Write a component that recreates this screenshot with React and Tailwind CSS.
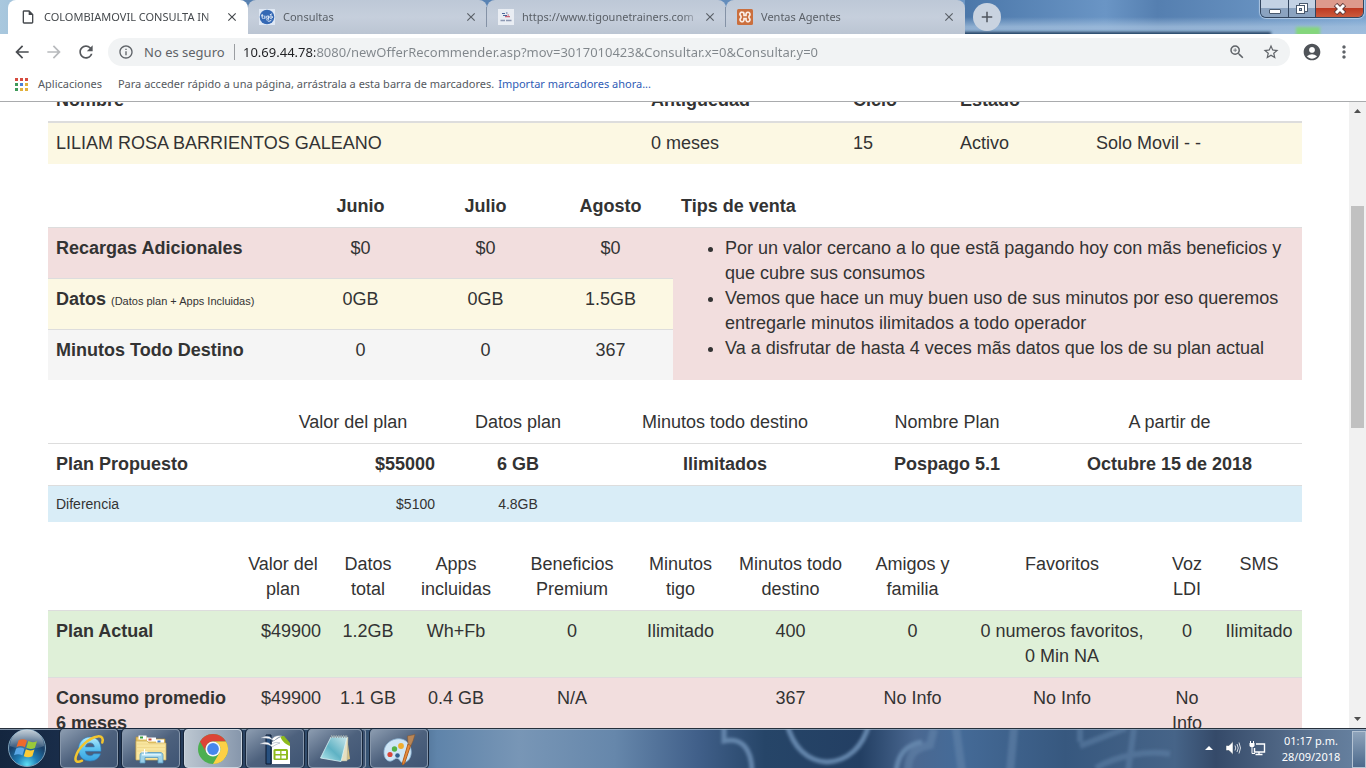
import {
  MdAccountCircle,
  MdAdd,
  MdArrowBack,
  MdArrowForward,
  MdClose,
  MdInfoOutline,
  MdMoreVert,
  MdOutlineInsertDriveFile,
  MdRefresh,
  MdStarBorder,
  MdZoomIn,
} from "react-icons/md";

const URL_TEXT =
  "10.69.44.78:8080/newOfferRecommender.asp?mov=3017010423&Consultar.x=0&Consultar.y=0";

/* ---------- Browser window ---------- */

function TigoIcon() {
  return (
    <svg viewBox="0 0 16 16" className="size-4 shrink-0" aria-hidden="true">
      <rect width="16" height="16" fill="#dfe8f4" />
      <circle cx="8" cy="8" r="7.3" fill="#3468b4" />
      <g fill="none" stroke="#dfe9f7" strokeWidth="1" strokeLinecap="round">
        <path d="M3.2 5.4v3.4c0 .6.4.8 1 .7M2.4 6.8h1.7M5.8 7v2.6" />
        <circle cx="8.3" cy="8.2" r="1.2" />
        <path d="M9.6 7v3.2c0 1-1.8 1.2-2.3.5" />
        <circle cx="12" cy="8.1" r="1.3" />
        <path d="M11.2 5.6l1.5-.6M9.2 12.2c1.3.2 2.6-.2 3.3-1.2" />
      </g>
    </svg>
  );
}

function TrainersIcon() {
  return (
    <svg viewBox="0 0 16 16" className="size-4 shrink-0" aria-hidden="true">
      <rect width="16" height="16" fill="#e9edf3" />
      <path d="M4 4.500h3M8 4h1.500M5 6.500h4" stroke="#4d6799" strokeWidth="1.100" />
      <path d="M7 7.600h5M9.500 6h1.500" stroke="#cd6478" strokeWidth="1.100" />
      <path d="M2.500 11.500h4.500M8 11.500h5.500" stroke="#8c98b2" strokeWidth="1.300" />
    </svg>
  );
}

function XamppIcon() {
  return (
    <svg viewBox="0 0 16 16" className="size-4 shrink-0" aria-hidden="true">
      <rect width="16" height="16" rx="1.500" fill="#cb6f3d" />
      <path
        d="M5 3.200a2 2 0 0 1 2 2v1.300h2V5.200a2 2 0 1 1 3.300 1.600c-.5.5-.5 1.900 0 2.400A2 2 0 1 1 9 10.800V9.500H7v1.300a2 2 0 1 1-3.300-1.600c.5-.5.5-1.900 0-2.400A2 2 0 0 1 5 3.200z"
        fill="none"
        stroke="#fbeee6"
        strokeWidth="1.700"
      />
    </svg>
  );
}

function Tab({ icon, title, active, divider }) {
  return (
    <div
      className={
        active
          ? "flex h-full w-60 items-center rounded-t-lg bg-white pl-3 text-[#45494d]"
          : "flex h-full w-[239px] items-center rounded-t-lg bg-linear-to-b from-[#bdc8d7] via-[#c6cfdc] to-[#bbc5d3] pl-[11px] text-[#5a6067]"
      }
    >
      {icon}
      <span className="ml-2 w-[178px] overflow-hidden whitespace-nowrap text-[11px] leading-5 mask-r-from-90%">
        {title}
      </span>
      <button type="button" aria-label={"Cerrar " + title} className="ml-0.5 grid size-4 place-items-center">
        <MdClose className="size-3.5" />
      </button>
      {divider && <span className="ml-auto h-5 w-px bg-[#8492a6]" />}
    </div>
  );
}

function WindowControls() {
  return (
    <div className="ml-auto mr-0.5 flex h-[18px] overflow-hidden rounded-b-md border border-t-0 border-[#33465f] shadow-[0_0_1px_1px_rgba(220,235,250,0.6)]">
      <button
        type="button"
        aria-label="Minimizar"
        className="grid w-7 place-items-center border-r border-[#33465f] bg-linear-to-b from-[#c3d2e4] from-50% to-[#8ba3c0] to-50%"
      >
        <svg viewBox="0 0 14 12" className="h-3 w-3.5">
          <rect x="1.500" y="6.500" width="11" height="4" rx=".5" fill="#fff" stroke="#4a5a6e" />
        </svg>
      </button>
      <button
        type="button"
        aria-label="Restaurar"
        className="grid w-[27px] place-items-center border-r border-[#33465f] bg-linear-to-b from-[#c3d2e4] from-50% to-[#8ba3c0] to-50%"
      >
        <svg viewBox="0 0 14 14" className="size-3.5">
          <rect x="4.500" y="1.500" width="8" height="8" fill="#fff" stroke="#4a5a6e" />
          <rect x="1.500" y="3.500" width="8" height="8" fill="#fff" stroke="#4a5a6e" />
          <rect x="4.500" y="6.500" width="2" height="2" fill="#b5c4d6" stroke="#4a5a6e" />
        </svg>
      </button>
      <button
        type="button"
        aria-label="Cerrar ventana"
        className="grid w-[47px] place-items-center bg-linear-to-b from-[#dd9a8c] from-45% via-[#bd3a22] via-50% to-[#cc5a3c]"
      >
        <svg viewBox="0 0 14 12" className="h-3 w-3.5">
          <path d="M2.500 1.500l9 9M11.500 1.500l-9 9" stroke="#5e3a3a" strokeWidth="4.800" />
          <path d="M3 2l8 8M11 2l-8 8" stroke="#fff" strokeWidth="2.900" />
        </svg>
      </button>
    </div>
  );
}

function TabStrip() {
  return (
    <div className="relative h-[34px] shrink-0 overflow-hidden bg-linear-to-r from-[#a9c8de] from-0% via-[#4f79ab] via-20% to-[#7fa8d3]">
      <svg
        className="absolute inset-y-0 right-0 h-full w-[401px]"
        viewBox="0 0 401 34"
        preserveAspectRatio="none"
        aria-hidden="true"
      >
        <defs>
          <linearGradient id="sky" x1="0" x2="1" y1="0" y2="0">
            <stop offset="0" stopColor="#4b77a9" />
            <stop offset=".35" stopColor="#6a95c5" />
            <stop offset=".48" stopColor="#557fb0" />
            <stop offset="1" stopColor="#78a3d0" />
          </linearGradient>
          <linearGradient id="haze" x1="0" x2="0" y1="0" y2="1">
            <stop offset=".5" stopColor="#a9c4e0" stopOpacity="0" />
            <stop offset=".78" stopColor="#a9c4e0" stopOpacity=".7" />
            <stop offset="1" stopColor="#a9c4e0" stopOpacity=".8" />
          </linearGradient>
          <filter id="soft" x="-20%" y="-100%" width="140%" height="300%">
            <feGaussianBlur stdDeviation="1.500" />
          </filter>
        </defs>
        <rect width="401" height="34" fill="url(#sky)" />
        <rect width="401" height="34" fill="url(#haze)" />
        <rect x="-6" y="32" width="312" height="4" fill="#1f3a5c" filter="url(#soft)" />
        <rect x="331" y="27" width="24" height="9" fill="#84d67c" filter="url(#soft)" />
      </svg>
      <div className="relative flex h-full pl-2">
        <Tab active icon={<MdOutlineInsertDriveFile className="size-4 shrink-0" />} title="COLOMBIAMOVIL CONSULTA IN" />
        <Tab divider icon={<TigoIcon />} title="Consultas" />
        <Tab divider icon={<TrainersIcon />} title="https://www.tigounetrainers.com" />
        <Tab icon={<XamppIcon />} title="Ventas Agentes" />
        <button
          type="button"
          aria-label="Nueva pestaña"
          className="ml-2 mt-[3px] grid size-7 place-items-center rounded-full bg-[#c9d3e0] text-[#4f565e]"
        >
          <MdAdd className="size-[18px]" />
        </button>
        <WindowControls />
      </div>
    </div>
  );
}

function Toolbar() {
  return (
    <div className="flex h-9 shrink-0 items-center bg-white pl-3.5 pr-3 text-[#5f6368]">
      <button type="button" aria-label="Atrás" className="mr-4 text-[#4a4d51]">
        <MdArrowBack className="size-4 scale-125" />
      </button>
      <button type="button" aria-label="Adelante" className="mr-4 text-[#b8babd]">
        <MdArrowForward className="size-4 scale-125" />
      </button>
      <button type="button" aria-label="Recargar" className="mr-3.5 text-[#55585c]">
        <MdRefresh className="size-4 scale-125" />
      </button>
      <div className="flex h-7 flex-1 items-center rounded-full bg-[#f1f3f4] pl-2.5 pr-2.5">
        <MdInfoOutline className="size-4 shrink-0" />
        <label htmlFor="url" className="ml-2.5 w-[91px] whitespace-nowrap border-r border-[#9a9da1] text-[13px] leading-4">
          No es seguro
        </label>
        <input
          id="url"
          type="text"
          defaultValue={URL_TEXT}
          className="ml-2 min-w-0 flex-1 bg-[linear-gradient(90deg,#202124_72px,#80868b_72px)] bg-clip-text text-[13px] leading-5 text-transparent outline-none"
        />
        <button type="button" aria-label="Zoom" className="mr-4">
          <MdZoomIn className="size-[18px]" />
        </button>
        <button type="button" aria-label="Añadir a marcadores">
          <MdStarBorder className="size-[18px]" />
        </button>
      </div>
      <button type="button" aria-label="Perfil" className="ml-3 text-[#505459]">
        <MdAccountCircle className="size-5" />
      </button>
      <button type="button" aria-label="Menú" className="ml-3">
        <MdMoreVert className="size-5" />
      </button>
    </div>
  );
}

const APP_DOTS = [
  "#d64b3f", "#d64b3f", "#d64b3f",
  "#3f9a5a", "#4a7fd6", "#e2b13c",
  "#3f9a5a", "#e2b13c", "#e2b13c",
];

function BookmarksBar() {
  return (
    <div className="flex h-8 shrink-0 items-center border-b border-[#a9abad] bg-white pb-0.5 pl-[15px] text-[11px] text-[#55595e]">
      <button type="button" className="flex items-center gap-2.5">
        <svg viewBox="0 0 13 13" className="size-[13px]" aria-hidden="true">
          {APP_DOTS.map((c, i) => (
            <rect key={i} x={(i % 3) * 5} y={Math.floor(i / 3) * 5} width="3" height="3" fill={c} />
          ))}
        </svg>
        Aplicaciones
      </button>
      <span className="ml-4">
        Para acceder rápido a una página, arrástrala a esta barra de marcadores.
      </span>
      <a href="#importar" className="ml-1 text-[#2f5cb5]">
        Importar marcadores ahora...
      </a>
    </div>
  );
}

/* ---------- Page tables ---------- */

function Cols({ widths }) {
  return (
    <colgroup>
      {widths.map((w, i) => (
        <col key={i} style={{ width: w }} />
      ))}
    </colgroup>
  );
}

const TABLE = "w-full table-fixed border-separate border-spacing-0 [&_td]:p-2 [&_th]:p-2 [&_td]:align-top [&_th]:align-top";
const LINED = " [&_tbody_td]:border-t [&_tbody_th]:border-t [&_tbody_td]:border-[#dddddd] [&_tbody_th]:border-[#dddddd]";

function CustomerTable() {
  return (
    <table className={TABLE + " text-left"}>
      <Cols widths={[595, 202, 107, 136, 214]} />
      <thead>
        <tr className="[&>th]:border-b-2 [&>th]:border-[#dddddd]">
          <th>Nombre</th>
          <th>Antiguedad</th>
          <th>Ciclo</th>
          <th>Estado</th>
          <th></th>
        </tr>
      </thead>
      <tbody>
        <tr className="bg-[#fcf8e3]">
          <td>LILIAM ROSA BARRIENTOS GALEANO</td>
          <td>0 meses</td>
          <td>15</td>
          <td>Activo</td>
          <td>Solo Movil - -</td>
        </tr>
      </tbody>
    </table>
  );
}

function UsageTable() {
  return (
    <table className={TABLE + LINED + " text-center"}>
      <Cols widths={[250, 125, 125, 125, 629]} />
      <thead>
        <tr>
          <th></th>
          <th>Junio</th>
          <th>Julio</th>
          <th>Agosto</th>
          <th className="text-left">Tips de venta</th>
        </tr>
      </thead>
      <tbody>
        <tr className="h-[51px] bg-[#f2dede]">
          <th className="text-left">Recargas Adicionales</th>
          <td>$0</td>
          <td>$0</td>
          <td>$0</td>
          <td rowSpan={3} className="text-left">
            <ul className="list-disc pl-11">
              <li>Por un valor cercano a lo que estã pagando hoy con mãs beneficios y que cubre sus consumos</li>
              <li>Vemos que hace un muy buen uso de sus minutos por eso queremos entregarle minutos ilimitados a todo operador</li>
              <li>Va a disfrutar de hasta 4 veces mãs datos que los de su plan actual</li>
            </ul>
          </td>
        </tr>
        <tr className="h-[51px] bg-[#fcf8e3]">
          <th className="whitespace-nowrap text-left">
            Datos <small className="text-[11px] font-normal">(Datos plan + Apps Incluidas)</small>
          </th>
          <td>0GB</td>
          <td>0GB</td>
          <td>1.5GB</td>
        </tr>
        <tr className="h-[51px] bg-[#f5f5f5]">
          <th className="text-left">Minutos Todo Destino</th>
          <td>0</td>
          <td>0</td>
          <td>367</td>
        </tr>
      </tbody>
    </table>
  );
}

function ProposalTable() {
  return (
    <table className={TABLE + LINED + " text-center"}>
      <Cols widths={[215, 180, 150, 264, 180, 265]} />
      <thead>
        <tr className="[&>th]:font-normal">
          <th></th>
          <th>Valor del plan</th>
          <th>Datos plan</th>
          <th>Minutos todo destino</th>
          <th>Nombre Plan</th>
          <th>A partir de</th>
        </tr>
      </thead>
      <tbody>
        <tr className="font-bold">
          <th className="text-left">Plan Propuesto</th>
          <td className="text-right">$55000</td>
          <td>6 GB</td>
          <td>Ilimitados</td>
          <td>Pospago 5.1</td>
          <td>Octubre 15 de 2018</td>
        </tr>
        <tr className="bg-[#d9edf7] text-sm leading-5">
          <th className="text-left font-normal">Diferencia</th>
          <td className="text-right">$5100</td>
          <td>4.8GB</td>
          <td></td>
          <td></td>
          <td></td>
        </tr>
      </tbody>
    </table>
  );
}

function PlanTable() {
  return (
    <table className={TABLE + LINED + " text-center"}>
      <Cols widths={[189, 92, 78, 98, 134, 83, 137, 107, 192, 58, 86]} />
      <thead>
        <tr className="[&>th]:font-normal">
          <th></th>
          <th>Valor del plan</th>
          <th>Datos total</th>
          <th>Apps incluidas</th>
          <th>Beneficios Premium</th>
          <th>Minutos tigo</th>
          <th>Minutos todo destino</th>
          <th>Amigos y familia</th>
          <th>Favoritos</th>
          <th>Voz LDI</th>
          <th>SMS</th>
        </tr>
      </thead>
      <tbody>
        <tr className="bg-[#dff0d8]">
          <th className="text-left">Plan Actual</th>
          <td className="text-right">$49900</td>
          <td>1.2GB</td>
          <td>Wh+Fb</td>
          <td>0</td>
          <td>Ilimitado</td>
          <td>400</td>
          <td>0</td>
          <td>
            0 numeros favoritos,
            <br />0 Min NA
          </td>
          <td>0</td>
          <td>Ilimitado</td>
        </tr>
        <tr className="bg-[#f2dede]">
          <th className="text-left">Consumo promedio 6 meses</th>
          <td className="text-right">$49900</td>
          <td>1.1 GB</td>
          <td>0.4 GB</td>
          <td>N/A</td>
          <td></td>
          <td>367</td>
          <td>No Info</td>
          <td>No Info</td>
          <td>No Info</td>
          <td></td>
        </tr>
      </tbody>
    </table>
  );
}

function ScrollBar() {
  return (
    <div className="flex w-[17px] shrink-0 flex-col items-center bg-[#f1f1f1]" aria-hidden="true">
      <svg viewBox="0 0 7 4" className="mb-[93px] mt-[7px] h-1 w-[7px] shrink-0">
        <path d="M0 4L3.500 0L7 4z" fill="#505050" />
      </svg>
      <div className="h-[222px] w-[13px] shrink-0 bg-[#c1c1c1]" />
      <svg viewBox="0 0 7 4" className="mb-[7px] mt-auto h-1 w-[7px] shrink-0">
        <path d="M0 0L3.500 4L7 0z" fill="#505050" />
      </svg>
    </div>
  );
}

/* ---------- Taskbar ---------- */

function StartOrb() {
  return (
    <svg viewBox="0 0 40 40" className="size-10" aria-hidden="true">
      <defs>
        <radialGradient id="orb" cx=".5" cy=".95" r=".95">
          <stop offset="0" stopColor="#5fe0f5" />
          <stop offset=".3" stopColor="#1f7db5" />
          <stop offset=".65" stopColor="#1a4069" />
          <stop offset="1" stopColor="#54748f" />
        </radialGradient>
        <linearGradient id="orbShine" x1="0" x2="0" y1="0" y2="1">
          <stop offset="0" stopColor="#fff" stopOpacity=".65" />
          <stop offset="1" stopColor="#fff" stopOpacity=".1" />
        </linearGradient>
      </defs>
      <circle cx="20" cy="20" r="18.500" fill="url(#orb)" stroke="#7fa3bc" strokeWidth="1" />
      <path d="M3 18a17 16.500 0 0 1 34 0c-8 4-26 4-34 0z" fill="url(#orbShine)" />
      <g transform="translate(-1 1) scale(1.050 .97)">
        <path d="M12 11.500c3-1.500 5.500-1.300 8 .3l-2 7c-2.500-1.500-5-1.700-8-.3z" fill="#ee6a2c" />
        <path d="M21.300 12.400c2.600 1.500 5.200 1.600 8.200.2l-2 7c-3 1.400-5.600 1.200-8.200-.2z" fill="#9ac93a" />
        <path d="M9.600 20c3-1.500 5.500-1.200 8 .3l-2 7c-2.500-1.500-5-1.700-8-.3z" fill="#5aa7e6" />
        <path d="M18.900 21c2.600 1.500 5.200 1.600 8.200.2l-2 7c-3 1.400-5.600 1.200-8.200-.2z" fill="#fccb35" />
      </g>
    </svg>
  );
}

function ExplorerE() {
  return (
    <svg viewBox="0 0 32 32" className="size-8" aria-hidden="true">
      <defs>
        <linearGradient id="ie" x1="0" x2="0" y1="0" y2="1">
          <stop offset="0" stopColor="#b5ebfc" />
          <stop offset=".5" stopColor="#5cc3f0" />
          <stop offset="1" stopColor="#37a2e0" />
        </linearGradient>
      </defs>
      <path
        d="M17 4C10.500 4 5.500 9.200 5.500 16.200 5.500 23.300 10.300 28 17 28c5.200 0 9-2.600 10.500-7.200h-6.800c-.7 1.200-1.900 1.900-3.600 1.900-2.700 0-4.500-1.500-4.700-4.400H28C28.600 9.500 24.200 4 17 4zm-4.500 9.900c.4-2.500 2-4 4.500-4s4.100 1.500 4.300 4z"
        fill="url(#ie)"
        stroke="#2a80c2"
        strokeWidth=".6"
      />
      <path
        d="M29.300 9.500C30.500 5.500 29 3 24.800 3.400 16 4.600 5.200 14.500 2.700 24c-1 4.200 1.300 6.200 6.300 3.700"
        fill="none"
        stroke="#f2c52f"
        strokeWidth="2.500"
        strokeLinecap="round"
      />
    </svg>
  );
}

function FolderIcon() {
  return (
    <svg viewBox="0 0 34 32" className="h-8 w-[34px]" aria-hidden="true">
      <path d="M2 4h11l2 2h16v20H2z" fill="#e8c765" stroke="#b4913e" strokeWidth=".7" />
      <path d="M4.500 2.500h8v4h-8z" fill="#fff" />
      <path d="M6 3.500h3v2H6z" fill="#3ba040" />
      <path d="M13 4.500h9v4h-9z" fill="#fff" />
      <path d="M14.500 5.500h3v2h-3z" fill="#c84637" />
      <path d="M22 6.500h8v4h-8z" fill="#fff" />
      <path d="M23.500 7.500h3v2h-3z" fill="#3f7fcc" />
      <path d="M2 8h11l2 2h17v17H2z" fill="#f8e6a0" stroke="#c9a956" strokeWidth=".7" />
      <path d="M3 11h28M3 14.500h28M3 18h28" stroke="#efd688" strokeWidth=".8" />
      <path
        d="M6 30v-7.500c0-2 1-3 3-3h17c2 0 3 1 3 3V30h-5v-5.500H11V30z"
        fill="#9ad3ee"
        fillOpacity=".95"
        stroke="#5697bd"
        strokeWidth=".8"
      />
      <path d="M8 21.800h19" stroke="#dff4fd" strokeWidth="1.500" />
      <path d="M10.500 16v6M7.500 19h6" stroke="#fff" strokeWidth="1" />
    </svg>
  );
}

function ChromeIcon() {
  return (
    <svg viewBox="0 0 32 32" className="size-8" aria-hidden="true">
      <circle cx="16" cy="16" r="15" fill="#4caf50" />
      <path d="M3 8.500A15 15 0 0 1 29 8.500H16a7.500 7.500 0 0 0-6.500 11.200z" fill="#dc4437" />
      <path d="M29 8.500A15 15 0 0 1 16 31l6.500-11.300A7.500 7.500 0 0 0 16 8.500z" fill="#fdd045" />
      <circle cx="16" cy="16" r="7.500" fill="#f6f8fa" />
      <circle cx="16" cy="16" r="5.900" fill="#4787ed" />
    </svg>
  );
}

function CalcIcon() {
  return (
    <svg viewBox="0 0 34 32" className="h-8 w-[34px]" aria-hidden="true">
      <path d="M8 2h5v29H8z" fill="#27507f" stroke="#0a1830" />
      <path d="M14 9l10-6 8 8v20H14z" fill="#fff" />
      <path d="M22 3h4l6 7v3c-3-1-8-4-10-10z" fill="#8fbb1c" />
      <path
        d="M3 5c5-3 9-2 11 1 2-3 6-4 10-3-4 1-6 3-8 5-4-3-8-3-13-3zM2 11c5-3 9-2 11 1 3-3 6-3 9-2-3 1-5 2-8 4-3-3-7-3-12-3z"
        fill="#fff"
        stroke="#8a99ad"
        strokeWidth=".5"
      />
      <rect x="15.500" y="16" width="14.500" height="11" rx="1.500" fill="#8fbb1c" />
      <path d="M17.500 18h4.700v3h-4.700zM23.500 18H28v3h-4.500zM17.500 22.500h4.700v3h-4.700zM23.500 22.500H28v3h-4.500z" fill="#fff" />
    </svg>
  );
}

function NotepadIcon() {
  return (
    <svg viewBox="0 0 32 32" className="size-8" aria-hidden="true">
      <defs>
        <linearGradient id="pad" x1="0" x2="1" y1="1" y2="0">
          <stop offset="0" stopColor="#b9e9ee" />
          <stop offset=".45" stopColor="#5fb2c4" />
          <stop offset="1" stopColor="#c9e6ea" />
        </linearGradient>
      </defs>
      <path d="M28 4l3 22-3 1z" fill="#d8c283" />
      <path d="M12 4h17l-1 24H22z" fill="#e6dfc0" stroke="#a7ae9c" strokeWidth=".5" />
      <path d="M12 4h16l-6 24.500L1.500 25z" fill="url(#pad)" stroke="#d9f1f5" strokeWidth=".8" />
      <path d="M12 3.500h17" stroke="#93a0a6" strokeWidth="3" strokeDasharray="1.200 1.200" />
    </svg>
  );
}

function PaintIcon() {
  return (
    <svg viewBox="0 0 34 32" className="h-8 w-[34px]" aria-hidden="true">
      <path
        d="M14 6C6 7.500 1.500 13.500 2 20.500 2.500 27 7 29.500 10.500 27.500c2.500-1.500 3.500-3 6-1.500 2 1.300 2 4.500 6 3.500 5-1.200 7.500-7 6.500-13C27.800 9 21.500 4.600 14 6z"
        fill="#cfe6f6"
        stroke="#8bb3d3"
        strokeWidth=".8"
      />
      <circle cx="8" cy="21.500" r="2.600" fill="#d9473a" />
      <circle cx="12.500" cy="16" r="2.700" fill="#53b348" />
      <circle cx="19" cy="13" r="2.900" fill="#f0ad2e" />
      <circle cx="15.500" cy="22.500" r="2.300" fill="#33608f" />
      <path d="M26 11l2.800.8L22.500 30.500l-2 1.500.2-3z" fill="#e98d3b" stroke="#b05f22" strokeWidth="1" />
      <path d="M25.500 3l7.500-1.500-2 6.500-2 4.500-3-1z" fill="#b98657" stroke="#80552f" strokeWidth=".5" />
    </svg>
  );
}

function TaskButton({ label, active, stacked, children }) {
  return (
    <div className="flex">
      <button
        type="button"
        aria-label={label}
        className={
          "grid h-[39px] place-items-center rounded-sm border shadow-[0_0_0_1px_#17263b] " +
          (stacked ? "w-[54px] " : "w-[58px] ") +
          (active
            ? "border-[#cbd5df] bg-linear-to-r from-[#bcc7d1] to-[#8797ac]"
            : "border-[#8797ab] bg-linear-to-br from-[#8c9cb0] via-[#4d617d] to-[#3f5574]")
        }
      >
        {children}
      </button>
      {stacked && <span className="ml-px h-[39px] w-[3px] rounded-r-sm border border-l-0 border-[#8797ab] bg-[#3c5271]" />}
    </div>
  );
}

function TaskbarBackdrop() {
  return (
    <svg
      className="absolute inset-0 h-full w-full"
      viewBox="0 0 1366 40"
      preserveAspectRatio="none"
      aria-hidden="true"
    >
      <defs>
        <linearGradient id="bar" x1="0" x2="1" y1="0" y2="0">
          <stop offset="0" stopColor="#14263f" />
          <stop offset=".06" stopColor="#1b2f4d" />
          <stop offset=".29" stopColor="#3b5878" />
          <stop offset=".32" stopColor="#5f84aa" />
          <stop offset=".38" stopColor="#7896b6" />
          <stop offset=".45" stopColor="#6687ab" />
          <stop offset=".51" stopColor="#41608a" />
          <stop offset=".56" stopColor="#264568" />
          <stop offset=".63" stopColor="#233f63" />
          <stop offset=".67" stopColor="#4a6891" />
          <stop offset=".7" stopColor="#456b98" />
          <stop offset=".78" stopColor="#37587f" />
          <stop offset=".86" stopColor="#466488" />
          <stop offset=".89" stopColor="#354a69" />
          <stop offset=".96" stopColor="#5b7391" />
          <stop offset="1" stopColor="#6883a2" />
        </linearGradient>
        <filter id="glow" x="-10%" y="-30%" width="120%" height="160%">
          <feGaussianBlur stdDeviation="1.500" />
        </filter>
      </defs>
      <rect width="1366" height="40" fill="url(#bar)" />
      <g fill="none" stroke="#6485ab" strokeWidth="5" filter="url(#glow)">
        <path d="M724 -4v17c18-4 28 8 28 32" />
        <path d="M787 -4c6 23 20 37 40 38 21-1 36-15 42-38" />
        <path d="M922 14c-16 3-24 12-26 30" />
        <path d="M908 44c0-20 8-24 22-27l4-16M956 0l6 44M1014 0l-4 44" strokeWidth="8" opacity=".55" />
        <path d="M1080 18l46-18M1134 0l-6 44M1096 40c20-12 50-18 74-14M1080 0v14" strokeWidth="6" opacity=".5" />
      </g>
      <path d="M0 .5h1366" stroke="#26303c" />
      <path d="M0 1.500h1366" stroke="#a9bccf" strokeOpacity=".7" />
    </svg>
  );
}

function Taskbar() {
  return (
    <footer className="relative h-10 shrink-0 overflow-hidden">
      <TaskbarBackdrop />
      <div className="relative flex h-full items-end">
        <button type="button" aria-label="Inicio" className="ml-[7px] mr-[13px]">
          <StartOrb />
        </button>
        <div className="flex gap-1">
          <TaskButton label="Internet Explorer"><ExplorerE /></TaskButton>
          <TaskButton label="Explorador de Windows"><FolderIcon /></TaskButton>
          <TaskButton label="Google Chrome" active><ChromeIcon /></TaskButton>
          <TaskButton label="OpenOffice Calc"><CalcIcon /></TaskButton>
          <TaskButton label="Bloc de notas" stacked><NotepadIcon /></TaskButton>
          <TaskButton label="Paint"><PaintIcon /></TaskButton>
        </div>
        <div className="ml-auto flex h-full items-center text-white">
          <button type="button" aria-label="Mostrar iconos ocultos">
            <svg viewBox="0 0 8 4" className="h-1 w-2">
              <path d="M0 4l4-4 4 4z" fill="#fff" />
            </svg>
          </button>
          <button type="button" aria-label="Volumen" className="ml-3">
            <svg viewBox="0 0 16 16" className="size-4">
              <path d="M1 5.500h3L8 1.500v13l-4-4H1z" fill="#fff" stroke="#33445b" strokeWidth=".5" />
              <path d="M10 5.500q1.500 2.500 0 5M12 4q2.500 4 0 8M14 2.500q3 5.500 0 11" fill="none" stroke="#fff" strokeWidth=".8" />
            </svg>
          </button>
          <button type="button" aria-label="Red" className="ml-2">
            <svg viewBox="0 0 17 16" className="h-4 w-[17px]">
              <path d="M7 4h8.500v8H5.500V8M6.500 14.500h7M10 12v2" fill="none" stroke="#fff" strokeWidth="1.400" />
              <path d="M1.500 1v3M4.500 1v3M3 7v6.500h3" fill="none" stroke="#fff" strokeWidth="1" />
              <path d="M.5 3h5v3L4.500 7h-3L.5 6z" fill="#fff" />
            </svg>
          </button>
          <time dateTime="2018-09-28T13:17" className="ml-3 mr-2 w-[66px] pt-0.5 text-center text-[11px] leading-4">
            01:17 p.m.
            <br />
            28/09/2018
          </time>
          <button
            type="button"
            aria-label="Mostrar escritorio"
            className="mt-0.5 h-[37px] w-3.5 border border-[#b4c3d3] bg-linear-to-b from-[#8fa4bb] to-[#4d6a8c]"
          />
        </div>
      </div>
    </footer>
  );
}

export default function App() {
  return (
    <div className="flex h-screen flex-col overflow-hidden bg-white font-['Noto_Sans','Open_Sans',sans-serif]">
      <header className="shrink-0">
        <TabStrip />
        <Toolbar />
        <BookmarksBar />
      </header>
      <div className="flex min-h-0 flex-1">
        <main className="-mt-6 min-w-0 flex-1 overflow-hidden [clip-path:inset(24px_0_0_0)]">
          <div className="flex flex-col gap-[22px] px-12 pt-0.5 font-['Liberation_Sans',Arial,sans-serif] text-lg leading-[25px] text-[#333333]">
            <CustomerTable />
            <UsageTable />
            <ProposalTable />
            <PlanTable />
          </div>
        </main>
        <ScrollBar />
      </div>
      <Taskbar />
    </div>
  );
}
